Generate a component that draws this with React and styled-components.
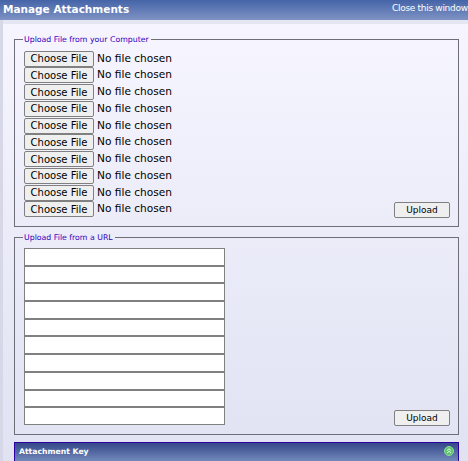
import React from 'react'
import styled, { createGlobalStyle } from 'styled-components'

const fileRows = [0, 1, 2, 3, 4, 5, 6, 7, 8, 9]

const GlobalStyle = createGlobalStyle`
  html, body {
    margin: 0;
    height: 100%;
    overflow: hidden;
  }
  body {
    font-family: "DejaVu Sans", Verdana, sans-serif;
    background: #e6e6f2;
  }
`

const App = () => (
    <Page>
        <GlobalStyle />
        <Header>
            <Title>Manage Attachments</Title>
            <CloseLink>Close this window</CloseLink>
        </Header>
        <Body>
            <Box $height={193} $gap={5}>
                <BoxLegend>Upload File from your Computer</BoxLegend>
                <FileList>
                    {fileRows.map((r) => <FileInput type="file" key={`file${r}`} />)}
                </FileList>
                <UploadButton>Upload</UploadButton>
            </Box>
            <Box $height={203} $gap={7}>
                <BoxLegend>Upload File from a URL</BoxLegend>
                <UrlList>
                    {fileRows.map((r) => <UrlInput type="text" key={`url${r}`} />)}
                </UrlList>
                <UploadButton>Upload</UploadButton>
            </Box>
            <KeyBar>
                <KeyTitle>Attachment Key</KeyTitle>
                <CollapseIcon width="10" height="10" viewBox="0 0 10 10">
                    <circle cx="5" cy="5" r="4.5" fill="#5fc46e" stroke="#8fdc9a" />
                    <path d="M3 4.5 5 2.8 7 4.5M3 7 5 5.3 7 7" fill="none" stroke="#e8f7ea" strokeWidth="1" />
                </CollapseIcon>
            </KeyBar>
        </Body>
    </Page>
)

export default App

//Styled components
const Page = styled.div`
  width: 468px;
  height: 461px;
  overflow: hidden;
  display: flex;
  flex-direction: column;
`

const Header = styled.header`
  flex: none;
  height: 20px;
  display: flex;
  justify-content: space-between;
  align-items: flex-start;
  background: linear-gradient(#4564a8, #7e93c4);
  color: #fff;
  white-space: nowrap;
`

const Title = styled.h1`
  margin: 0;
  padding: 3px 0 0 3px;
  font-size: 10.5px;
  line-height: 13px;
  font-weight: bold;
`

const CloseLink = styled.a`
  flex: none;
  width: 76px;
  overflow: hidden;
  padding-top: 2px;
  font-size: 9px;
  letter-spacing: -0.3px;
  line-height: 13px;
`

const Body = styled.main`
  flex: 1;
  margin-left: 3px;
  padding: 10px 9px 0 11px;
  border-top: 4px solid #e6e6f2;
  background: linear-gradient(#f6f5ff, #e0e2f2);
  box-shadow: -3px 0 0 #d6d8e8;
`

const Box = styled.fieldset`
  position: relative;
  box-sizing: border-box;
  height: ${(props) => props.$height}px;
  margin: 0 0 ${(props) => props.$gap}px;
  padding: 0 9px;
  border: 1px solid #6e6e78;
  min-width: 0;
`

const BoxLegend = styled.legend`
  padding: 0 2px 0 1px;
  font-size: 7.8px;
  line-height: 11px;
  color: #3300bb;
  margin-left: -1px;
`

const FileList = styled.div`
  display: flex;
  flex-direction: column;
  padding-top: 5.6px;
`

const FileInput = styled.input`
  display: block;
  height: 16.75px;
  width: 300px;
  font-family: "DejaVu Sans", Verdana, sans-serif;
  font-size: 10.6px;
  color: #000;

  &::file-selector-button {
    box-sizing: border-box;
    width: 70px;
    height: 16px;
    margin-right: 3px;
    padding: 0;
    vertical-align: -0.5px;
    font-family: inherit;
    font-size: 10px;
    background: #efefef;
    border: 1px solid #808080;
    border-radius: 2px;
    color: #000;
  }
`

const UrlList = styled.div`
  display: flex;
  flex-direction: column;
  padding-top: 5px;
`

const UrlInput = styled.input`
  box-sizing: border-box;
  display: block;
  width: 201px;
  height: 17.7px;
  margin: 0;
  padding: 0;
  background: #fff;
  border: 1px solid #808080;
  border-radius: 0;
`

const UploadButton = styled.button`
  position: absolute;
  right: 8px;
  bottom: 8px;
  box-sizing: border-box;
  width: 56px;
  height: 16px;
  padding: 0;
  font-family: "DejaVu Sans", Verdana, sans-serif;
  font-size: 9px;
  color: #000;
  background: #efefef;
  border: 1px solid #808080;
  border-radius: 2px;
`

const KeyBar = styled.section`
  box-sizing: border-box;
  height: 30px;
  display: flex;
  justify-content: space-between;
  padding: 3px 4px 0 4px;
  background: linear-gradient(#35488a, #6f86b8 60%);
  border: 1px solid #2a00a0;
  border-bottom: none;
`

const KeyTitle = styled.h2`
  margin: 0;
  font-size: 7.7px;
  line-height: 12px;
  font-weight: bold;
  color: #fff;
`

const CollapseIcon = styled.svg`
  flex: none;
`
